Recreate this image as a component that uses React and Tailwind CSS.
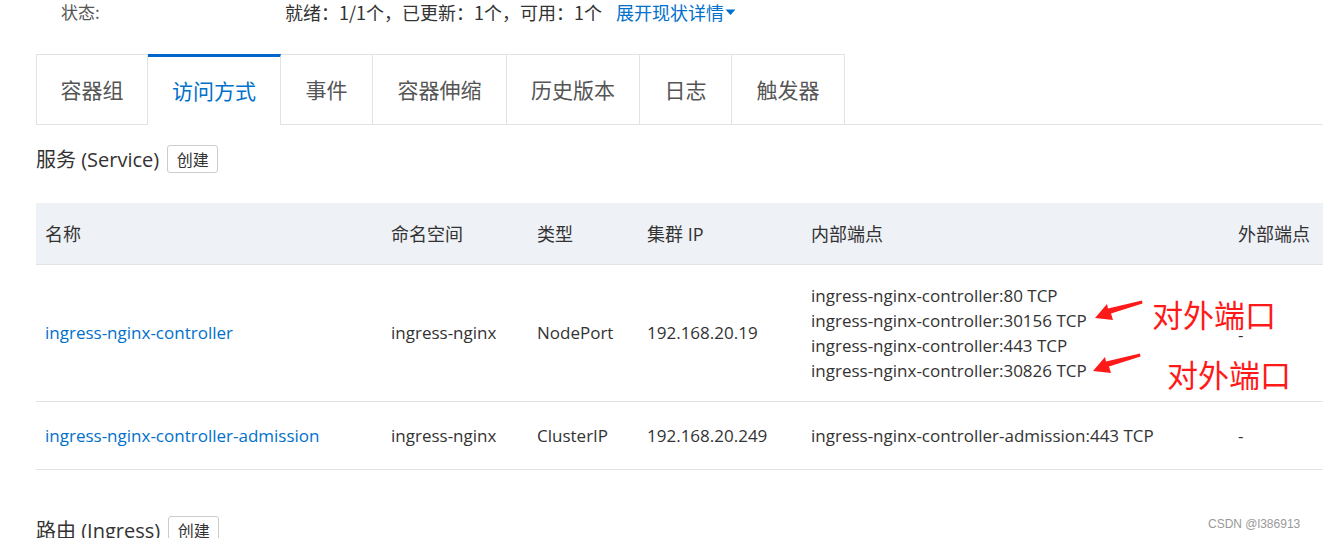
import React from "react";

const font = { fontFamily: '"Open Sans", "Noto Sans CJK SC", sans-serif' };
const cjk = { fontFamily: '"Noto Sans CJK SC", sans-serif' };

const tabs = ["容器组", "访问方式", "事件", "容器伸缩", "历史版本", "日志", "触发器"];
const tabW = ["w-[112px]", "w-[133px]", "w-[92px]", "w-[134px]", "w-[133px]", "w-[92px]", "w-[113px]"];

function Arrow({ className }) {
  return (
    <svg className={className} width="52" height="22" viewBox="0 0 52 22">
      <path d="M2 18 L14 4 L15 8.5 L49 0.5 L49.5 3.5 L18 13.5 L20 20 Z" fill="#ff1a1a" />
    </svg>
  );
}

const cols = "grid grid-cols-[346px_146px_110px_164px_427px_200px]";

export default function App() {
  return (
    <div className="w-[1323px] h-[538px] overflow-hidden bg-white text-[#333] relative" style={font}>
      <div className="flex items-center h-[24px] text-[18px]" style={cjk}>
        <span className="ml-[61px] w-[224px] text-[#555] text-[17px]">状态:</span>
        <span className="text-[#333]">就绪：1/1个，已更新：1个，可用：1个</span>
        <span className="ml-[14px] text-[#0070cc] flex items-center">
          展开现状详情
          <svg width="11" height="8" viewBox="0 0 11 8" className="ml-[1px]"><path d="M0.5 1.5 L10.5 1.5 L5.5 7 Z" fill="#0070cc" /></svg>
        </span>
      </div>

      <div className="mt-[30px] ml-[36px] flex border-b border-[#e3e3e3] h-[71px]" style={cjk}>
        {tabs.map((t, i) => (
          <div
            key={t}
            className={
              tabW[i] +
              " flex items-center justify-center text-[21px] border-r border-[#e3e3e3] " +
              (i === 0 ? "border-l " : "") +
              (i === 1
                ? "border-t-[3px] border-t-[#0066cc] text-[#0070cc] bg-white -mb-[1px] h-[71px]"
                : "border-t text-[#555] h-[70px]")
            }
          >
            <span className={i === 1 ? "-mt-[1px]" : ""}>{t}</span>
          </div>
        ))}
      </div>

      <div className="ml-[36px] mt-[20px] flex items-center h-[28px]">
        <span className="text-[20px] text-[#333]"><span style={cjk}>服务</span> (Service)</span>
        <button className="ml-[8px] h-[28px] w-[51px] border border-[#ccc] rounded-[3px] text-[16px] text-[#333] bg-white" style={cjk}>创建</button>
      </div>

      <div className="ml-[36px] mt-[30px] text-[17px]">
        <div className={cols + " bg-[#eef1f6] h-[62px] items-center border-b border-[#e3e3e3] text-[18px] text-[#333]"}>
          <div className="pl-[9px]" style={cjk}>名称</div>
          <div className="pl-[9px]" style={cjk}>命名空间</div>
          <div className="pl-[9px]" style={cjk}>类型</div>
          <div className="pl-[9px]"><span style={cjk}>集群</span> IP</div>
          <div className="pl-[9px]" style={cjk}>内部端点</div>
          <div className="pl-[9px]" style={cjk}>外部端点</div>
        </div>
        <div className={cols + " h-[137px] items-center border-b border-[#e3e3e3]"}>
          <div className="pl-[9px] text-[#0070cc]">ingress-nginx-controller</div>
          <div className="pl-[9px]">ingress-nginx</div>
          <div className="pl-[9px]">NodePort</div>
          <div className="pl-[9px]">192.168.20.19</div>
          <div className="pl-[9px] leading-[25px]">
            <div>ingress-nginx-controller:80 TCP</div>
            <div>ingress-nginx-controller:30156 TCP</div>
            <div>ingress-nginx-controller:443 TCP</div>
            <div>ingress-nginx-controller:30826 TCP</div>
          </div>
          <div className="pl-[9px] pt-[4px]">-</div>
        </div>
        <div className={cols + " h-[68px] items-center border-b border-[#e3e3e3]"}>
          <div className="pl-[9px] text-[#0070cc]">ingress-nginx-controller-admission</div>
          <div className="pl-[9px]">ingress-nginx</div>
          <div className="pl-[9px]">ClusterIP</div>
          <div className="pl-[9px]">192.168.20.249</div>
          <div className="pl-[9px]">ingress-nginx-controller-admission:443 TCP</div>
          <div className="pl-[9px]">-</div>
        </div>
      </div>

      <div className="ml-[36px] mt-[46px] flex items-center h-[28px]">
        <span className="text-[20px] text-[#333]"><span style={cjk}>路由</span> (Ingress)</span>
        <button className="ml-[8px] h-[28px] w-[51px] border border-[#ccc] rounded-[3px] text-[16px] text-[#333] bg-white" style={cjk}>创建</button>
      </div>

      <Arrow className="absolute left-[1093px] top-[300px]" />
      <Arrow className="absolute left-[1091px] top-[353px]" />
      <div className="absolute left-[1152px] top-[294px] text-[31px] leading-[40px] text-[#ff1a1a]" style={cjk}>对外端口</div>
      <div className="absolute left-[1167px] top-[354px] text-[31px] leading-[40px] text-[#ff1a1a]" style={cjk}>对外端口</div>
      <div className="absolute left-[1208px] top-[515px] text-[12px] text-[#999]" style={{ fontFamily: '"Liberation Sans", sans-serif' }}>CSDN @l386913</div>
    </div>
  );
}
